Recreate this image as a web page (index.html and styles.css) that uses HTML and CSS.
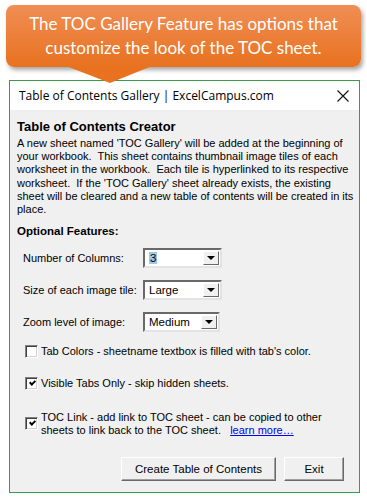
FILE: index.html
```html
<!DOCTYPE html>
<html lang="en">
<head>
  <meta charset="UTF-8" />
  <title>Table of Contents Gallery</title>
  <link rel="stylesheet" href="styles.css">
</head>
<body>
  <div class="callout">
    The TOC Gallery Feature has options that<br>customize the look of the TOC sheet.
    <svg class="callout-tip" width="86" height="18" viewBox="0 0 86 18">
      <polygon points="0,0 86,0 44,17" fill="#e8721f" />
    </svg>
  </div>

  <div class="dialog">
    <div class="titlebar">
      <span>Table of Contents Gallery | ExcelCampus.com</span>
      <svg class="close" width="12" height="12" viewBox="0 0 12 12">
        <path d="M0.5 0.5 L11.5 11.5 M11.5 0.5 L0.5 11.5" stroke="#111" stroke-width="1.1" />
      </svg>
    </div>

    <div class="content">
      <h2>Table of Contents Creator</h2>
      <p class="intro">
        A new sheet named 'TOC Gallery' will be added at the beginning of<br>
        your workbook.&nbsp; This sheet contains thumbnail image tiles of each<br>
        worksheet in the workbook.&nbsp; Each tile is hyperlinked to its respective<br>
        worksheet.&nbsp; If the 'TOC Gallery' sheet already exists, the existing<br>
        sheet will be cleared and a new table of contents will be created in its<br>
        place.
      </p>

      <h3>Optional Features:</h3>

      <div class="field">
        <label>Number of Columns:</label>
        <div class="combo">
          <span class="combo-value"><span class="sel">3</span></span>
          <span class="combo-btn"></span>
        </div>
      </div>
      <div class="field">
        <label>Size of each image tile:</label>
        <div class="combo">
          <span class="combo-value">Large</span>
          <span class="combo-btn"></span>
        </div>
      </div>
      <div class="field">
        <label>Zoom level of image:</label>
        <div class="combo narrow">
          <span class="combo-value">Medium</span>
          <span class="combo-btn"></span>
        </div>
      </div>

      <div class="check first">
        <span class="box"></span>
        <span class="check-text">Tab Colors - sheetname textbox is filled with tab's color.</span>
      </div>
      <div class="check">
        <span class="box checked"></span>
        <span class="check-text">Visible Tabs Only - skip hidden sheets.</span>
      </div>
      <div class="check tall">
        <span class="box checked"></span>
        <span class="check-text">TOC Link - add link to TOC sheet - can be copied to other<br>sheets to link back to the TOC sheet.&nbsp;&nbsp; <a href="#">learn more…</a></span>
      </div>

      <div class="buttons">
        <button class="btn wide">Create Table of Contents</button>
        <button class="btn">Exit</button>
      </div>
    </div>
  </div>
</body>
</html>
```

FILE: styles.css
```css
body {
  margin: 0;
  background: #fff;
  font-family: "Liberation Sans", Arial, sans-serif;
  width: 367px;
}

/* orange speech bubble */
.callout {
  position: relative;
  margin: 5px 6px 0 6px;
  height: 62px;
  box-sizing: border-box;
  padding-top: 7px;
  border-radius: 8px;
  background: linear-gradient(#f08e55, #e8721f);
  box-shadow: 2px 3px 4px rgba(0, 0, 0, 0.35);
  color: #fff;
  font-family: Lato, "Open Sans", sans-serif;
  font-size: 17px;
  line-height: 24px;
  text-align: center;
  z-index: 2;
}

.callout-tip {
  position: absolute;
  left: 60px;
  top: 61px;
}

/* dialog window */
.dialog {
  margin: 13px 0 0 9px;
  width: 351px;
  height: 413px;
  box-sizing: border-box;
  border: 1px solid #3a9a50;
  background: #f0f0f0;
  display: flex;
  flex-direction: column;
}

.titlebar {
  height: 29px;
  background: #fff;
  display: flex;
  align-items: center;
  justify-content: space-between;
  padding: 0 9px 0 9px;
  font-family: "Open Sans", "Noto Sans", sans-serif;
  font-size: 12px;
  color: #000;
}

.close {
  margin-right: 1px;
}

.content {
  flex: 1;
  padding: 9px 8px 0 7px;
  font-size: 11px;
  color: #000;
}

.content h2 {
  margin: 0;
  font-size: 13px;
  line-height: 16px;
  font-weight: bold;
}

.intro {
  margin: 2px 0 0 0;
  line-height: 13.2px;
  white-space: nowrap;
}

.content h3 {
  margin: 8px 0 0 0;
  font-size: 11.5px;
  line-height: 14px;
  font-weight: bold;
}

.field {
  display: flex;
  align-items: center;
  height: 20px;
  margin: 10px 0 0 6px;
}

.field + .field {
  margin-top: 12px;
}

.field label {
  width: 120px;
}

.combo {
  width: 79px;
  height: 20px;
  box-sizing: border-box;
  border-style: solid;
  border-width: 2px;
  border-color: #696969 #e3e3e3 #e3e3e3 #696969;
  background: #fff;
  display: flex;
  align-items: center;
  justify-content: space-between;
  padding-right: 1px;
}

.combo.narrow {
  width: 77px;
}

.combo-value {
  padding-left: 4px;
  font-size: 11.5px;
}

.combo-value .sel {
  background: #99c9ef;
  color: #000;
  padding: 0 1px;
}

.combo-btn {
  width: 16px;
  height: 14px;
  box-sizing: border-box;
  border-style: solid;
  border-width: 1px;
  border-color: #fff #696969 #696969 #fff;
  background: #f0f0f0;
  display: flex;
  align-items: center;
  justify-content: center;
}

.combo-btn::after {
  content: "";
  border-left: 4px solid transparent;
  border-right: 4px solid transparent;
  border-top: 4px solid #000;
}

.check {
  display: flex;
  align-items: flex-start;
  margin: 19px 0 0 8px;
  line-height: 13px;
}

.check.first {
  margin-top: 13px;
}

.check.tall {
  margin-top: 21px;
}

.box {
  flex: none;
  width: 13px;
  height: 13px;
  box-sizing: border-box;
  margin-right: 3px;
  border-style: solid;
  border-width: 1px;
  border-color: #808080 #fff #fff #808080;
  box-shadow: inset 1px 1px 0 #404040, inset -1px -1px 0 #d4d4d4;
  background: #fff;
  position: relative;
}

.check.tall .box {
  margin-top: 6px;
}

.box.checked::after {
  content: "";
  position: absolute;
  left: 3px;
  top: 5px;
  width: 4px;
  height: 2px;
  border-left: 2px solid #000;
  border-bottom: 2px solid #000;
  transform: rotate(-45deg);
  transform-origin: left top;
}

.check-text a {
  color: #0000ee;
}

.buttons {
  display: flex;
  justify-content: flex-end;
  gap: 8px;
  margin: 20px 7px 0 0;
}

.btn {
  height: 24px;
  width: 60px;
  box-sizing: border-box;
  border-style: solid;
  border-width: 1px;
  border-color: #fff #696969 #696969 #fff;
  box-shadow: inset -1px -1px 0 #a0a0a0;
  background: #f0f0f0;
  font-family: "Liberation Sans", Arial, sans-serif;
  font-size: 11.5px;
  color: #000;
  padding: 0;
}

.btn.wide {
  width: 155px;
}
```
